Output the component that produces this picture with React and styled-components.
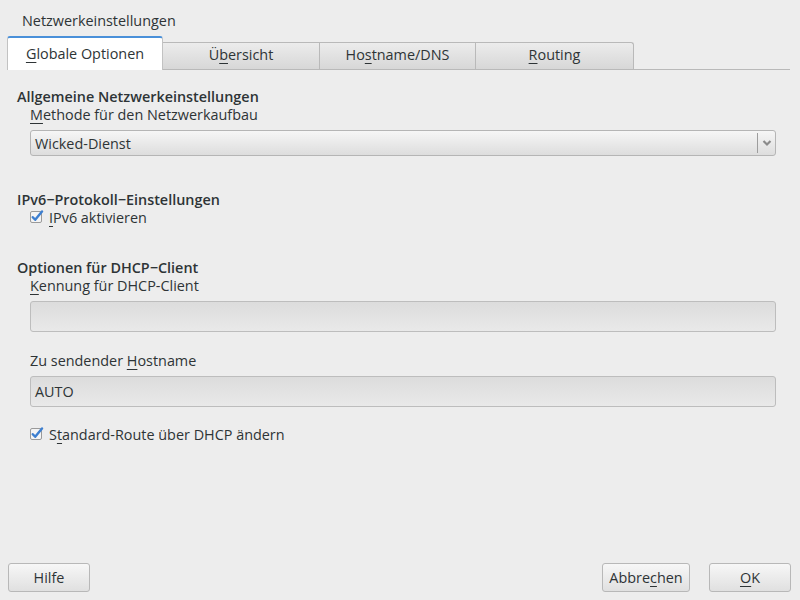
import React from "react";
import styled, { createGlobalStyle } from "styled-components";

const Global = createGlobalStyle`
  html, body { margin: 0; padding: 0; background: #ededed; }
  * { box-sizing: border-box; }
`;

const Window = styled.div`
  width: 800px;
  height: 600px;
  display: flex;
  flex-direction: column;
  background: #ededed;
  font-family: "Open Sans", "Noto Sans", sans-serif;
  font-size: 14.4px;
  color: #2e3436;
`;

const Title = styled.div`
  height: 36px;
  padding: 4px 0 0 22px;
  display: flex;
  align-items: center;
`;

const TabBar = styled.div`
  display: flex;
  align-items: flex-end;
  height: 34px;
  margin: 0 10px 0 7px;
  border-bottom: 1px solid #b9b9b9;
`;

const Tab = styled.div`
  width: ${(p) => p.$w}px;
  display: flex;
  align-items: center;
  justify-content: center;
  ${(p) =>
    p.$active
      ? `
    height: 34px;
    margin-bottom: -1px;
    background: #ffffff;
    border: 1px solid #c2c2c2;
    border-top: 2px solid #4a90d9;
    border-bottom: none;
    border-radius: 3px 3px 0 0;
    padding-bottom: 2px;
  `
      : `
    height: 27px;
    padding-bottom: 3px;
    background: linear-gradient(#ececec, #d7d7d7);
    border: 1px solid #b9b9b9;
    border-left: none;
    border-bottom: none;
    ${p.$last ? "border-radius: 0 3px 0 0;" : ""}
  `}
`;

const Mn = styled.span`
  text-decoration: underline;
  text-underline-offset: 3px;
  text-decoration-thickness: 1px;
`;

const Content = styled.div`
  display: flex;
  flex-direction: column;
  padding: 0 24px 0 17px;
`;

const Heading = styled.div`
  font-weight: 600;
  line-height: 18px;
  margin-top: ${(p) => p.$mt}px;
`;

const Label = styled.div`
  line-height: ${(p) => p.$lh || 18}px;
  margin-top: ${(p) => p.$mt || 0}px;
  padding-left: 13px;
`;

const Combo = styled.div`
  margin: 7px 0 0 13px;
  height: 26px;
  border: 1px solid #b5b5b5;
  border-radius: 3px;
  background: linear-gradient(#f6f6f6, #dddddd);
  display: flex;
  align-items: center;
  padding-left: 4px;
`;

const ComboText = styled.div`
  flex: 1;
`;

const ComboArrow = styled.div`
  width: 18px;
  height: 20px;
  border-left: 1px solid #9d9d9d;
  display: flex;
  align-items: center;
  justify-content: center;
`;

const Input = styled.div`
  margin: 6px 0 0 13px;
  height: 31px;
  border: 1px solid #bdbdbd;
  border-radius: 3px;
  background: linear-gradient(#dcdcdc, #e9e9e9);
  display: flex;
  align-items: center;
  padding-left: 4px;
`;

const CheckRow = styled.div`
  display: flex;
  align-items: center;
  height: 16px;
  margin-top: ${(p) => p.$mt || 0}px;
  padding-left: 13px;
  gap: 5px;
`;

const Footer = styled.div`
  margin-top: auto;
  display: flex;
  align-items: center;
  padding: 0 9px 8px 8px;
`;

const Button = styled.div`
  width: ${(p) => p.$w}px;
  height: 29px;
  border: 1px solid #b8b8b8;
  border-radius: 3px;
  background: linear-gradient(#f7f7f7, #e0e0e0);
  display: flex;
  align-items: center;
  justify-content: center;
  margin-left: ${(p) => p.$ml || 0}px;
`;

const Spacer = styled.div`
  flex: 1;
`;

const CheckIcon = () => (
  <svg width="14" height="14" viewBox="0 0 14 14">
    <rect x="0.5" y="1.5" width="11" height="11" rx="1.5" fill="#f4f4f4" stroke="#9a9a9a" />
    <path d="M2.8 7.2 L5.2 9.8 L12 1.4" fill="none" stroke="#3d7fd0" strokeWidth="2.4" strokeLinecap="round" strokeLinejoin="round" />
  </svg>
);

const Chevron = () => (
  <svg width="10" height="8" viewBox="0 0 10 8">
    <path d="M1.5 2 L5 5.5 L8.5 2" fill="none" stroke="#8a8a8a" strokeWidth="2.2" />
  </svg>
);

export default function App() {
  return (
    <Window>
      <Global />
      <Title>Netzwerkeinstellungen</Title>
      <TabBar>
        <Tab $active $w={156}>
          <span><Mn>G</Mn>lobale Optionen</span>
        </Tab>
        <Tab $w={157}>
          <span>Ü<Mn>b</Mn>ersicht</span>
        </Tab>
        <Tab $w={156}>
          <span>Ho<Mn>s</Mn>tname/DNS</span>
        </Tab>
        <Tab $w={158} $last>
          <span><Mn>R</Mn>outing</span>
        </Tab>
      </TabBar>
      <Content>
        <Heading $mt={18}>Allgemeine Netzwerkeinstellungen</Heading>
        <Label $lh={17}><Mn>M</Mn>ethode für den Netzwerkaufbau</Label>
        <Combo>
          <ComboText>Wicked-Dienst</ComboText>
          <ComboArrow><Chevron /></ComboArrow>
        </Combo>
        <Heading $mt={35}>IPv6−Protokoll−Einstellungen</Heading>
        <CheckRow>
          <CheckIcon />
          <span><Mn>I</Mn>Pv6 aktivieren</span>
        </CheckRow>
        <Heading $mt={34}>Optionen für DHCP−Client</Heading>
        <Label><Mn>K</Mn>ennung für DHCP-Client</Label>
        <Input />
        <Label $mt={20}>Zu sendender <Mn>H</Mn>ostname</Label>
        <Input>AUTO</Input>
        <CheckRow $mt={19}>
          <CheckIcon />
          <span>S<Mn>t</Mn>andard-Route über DHCP ändern</span>
        </CheckRow>
      </Content>
      <Footer>
        <Button $w={82}>Hilfe</Button>
        <Spacer />
        <Button $w={88}>Abbre<Mn>c</Mn>hen</Button>
        <Button $w={82} $ml={19}><Mn>O</Mn>K</Button>
      </Footer>
    </Window>
  );
}
